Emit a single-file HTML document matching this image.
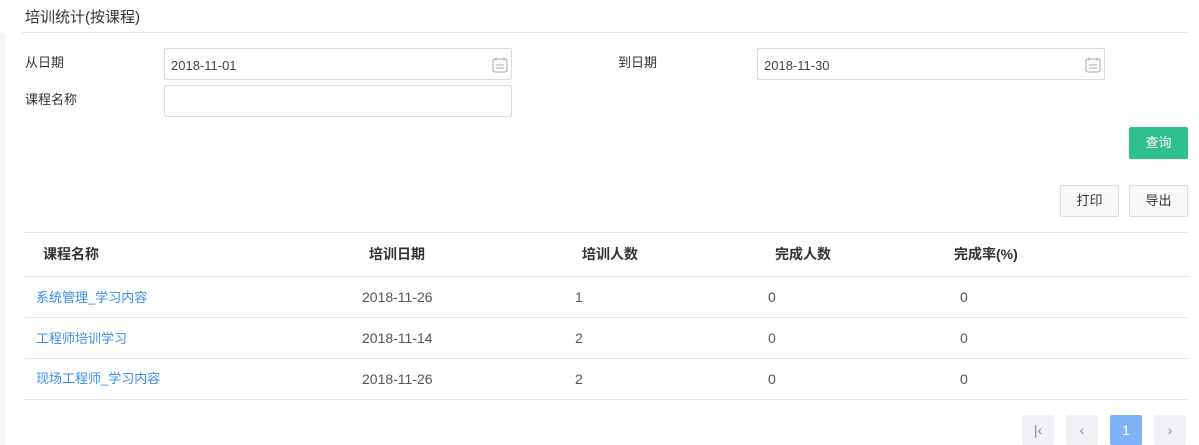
<!DOCTYPE html>
<html><head><meta charset="utf-8"><style>
*{margin:0;padding:0;box-sizing:border-box}
body{width:1199px;height:445px;background:#fff;font-family:"Liberation Sans","Noto Sans CJK SC",sans-serif;font-size:13px;color:#333;position:relative;overflow:hidden}
.a{position:absolute}
.strip{left:0;top:33px;width:6px;height:412px;background:#f5f6f8}
.title{left:25px;top:6px;font-size:15px;color:#333}
.hl{left:22px;top:32px;width:1166px;height:1px;background:#e6e6ea}
.lbl{font-size:13px;color:#333}
.inp{border:1px solid #dcdcdf;border-radius:2px;height:32px;width:348px;background:#fff;padding-left:6px;line-height:33px;font-size:13px;color:#444}
.cal{position:absolute;right:2px;top:7px}
.btn{border:1px solid #dcdcdf;border-radius:2px;background:#f8f8f8;width:59px;height:32px;text-align:center;line-height:30px;font-size:13px;color:#333}
.tl{left:25px;width:1163px;height:1px;background:#e6e6f3}
.th{top:244px;font-weight:bold;font-size:14px;color:#333}
.td{font-size:14px;color:#555}
.lk{color:#3a8ef0;font-size:13px}
.pg{top:415px;width:32px;height:30px;background:#f0f1f4;border-radius:2px;text-align:center;line-height:30px;color:#888;font-size:14px}
</style></head><body>
<div class="a strip"></div>
<div class="a title">培训统计(按课程)</div>
<div class="a hl"></div>
<div class="a lbl" style="left:25px;top:52px">从日期</div>
<div class="a inp" style="left:164px;top:48px">2018-11-01<svg class="cal" width="18" height="18" viewBox="0 0 18 18"><rect x="2" y="3" width="14" height="13" rx="2" fill="none" stroke="#aaa" stroke-width="1"/><line x1="5" y1="1.5" x2="5" y2="4.5" stroke="#aaa"/><line x1="13" y1="1.5" x2="13" y2="4.5" stroke="#aaa"/><line x1="5" y1="9" x2="13" y2="9" stroke="#aaa"/><line x1="5" y1="12" x2="13" y2="12" stroke="#aaa"/></svg></div>
<div class="a lbl" style="left:618px;top:52px">到日期</div>
<div class="a inp" style="left:757px;top:48px">2018-11-30<svg class="cal" width="18" height="18" viewBox="0 0 18 18"><rect x="2" y="3" width="14" height="13" rx="2" fill="none" stroke="#aaa" stroke-width="1"/><line x1="5" y1="1.5" x2="5" y2="4.5" stroke="#aaa"/><line x1="13" y1="1.5" x2="13" y2="4.5" stroke="#aaa"/><line x1="5" y1="9" x2="13" y2="9" stroke="#aaa"/><line x1="5" y1="12" x2="13" y2="12" stroke="#aaa"/></svg></div>
<div class="a lbl" style="left:25px;top:89px">课程名称</div>
<div class="a inp" style="left:164px;top:85px"></div>
<div class="a" style="left:1129px;top:127px;width:59px;height:32px;background:#30bf91;border-radius:2px;color:#fff;text-align:center;line-height:32px">查询</div>
<div class="a btn" style="left:1060px;top:185px">打印</div>
<div class="a btn" style="left:1129px;top:185px">导出</div>
<div class="a tl" style="top:232px"></div>
<div class="a th" style="left:43px">课程名称</div>
<div class="a th" style="left:369px">培训日期</div>
<div class="a th" style="left:582px">培训人数</div>
<div class="a th" style="left:775px">完成人数</div>
<div class="a th" style="left:954px">完成率(%)</div>
<div class="a tl" style="top:276px"></div>
<div class="a lk" style="left:36px;top:287px">系统管理_学习内容</div>
<div class="a td" style="left:362px;top:289px">2018-11-26</div>
<div class="a td" style="left:575px;top:289px">1</div>
<div class="a td" style="left:768px;top:289px">0</div>
<div class="a td" style="left:960px;top:289px">0</div>
<div class="a tl" style="top:317px"></div>
<div class="a lk" style="left:36px;top:328px">工程师培训学习</div>
<div class="a td" style="left:362px;top:330px">2018-11-14</div>
<div class="a td" style="left:575px;top:330px">2</div>
<div class="a td" style="left:768px;top:330px">0</div>
<div class="a td" style="left:960px;top:330px">0</div>
<div class="a tl" style="top:358px"></div>
<div class="a lk" style="left:36px;top:368px">现场工程师_学习内容</div>
<div class="a td" style="left:362px;top:371px">2018-11-26</div>
<div class="a td" style="left:575px;top:371px">2</div>
<div class="a td" style="left:768px;top:371px">0</div>
<div class="a td" style="left:960px;top:371px">0</div>
<div class="a tl" style="top:399px"></div>
<div class="a pg" style="left:1022px">|&lsaquo;</div>
<div class="a pg" style="left:1066px">&lsaquo;</div>
<div class="a pg" style="left:1110px;background:#7fb3f7;color:#fff">1</div>
<div class="a pg" style="left:1154px">&rsaquo;</div>
</body></html>
